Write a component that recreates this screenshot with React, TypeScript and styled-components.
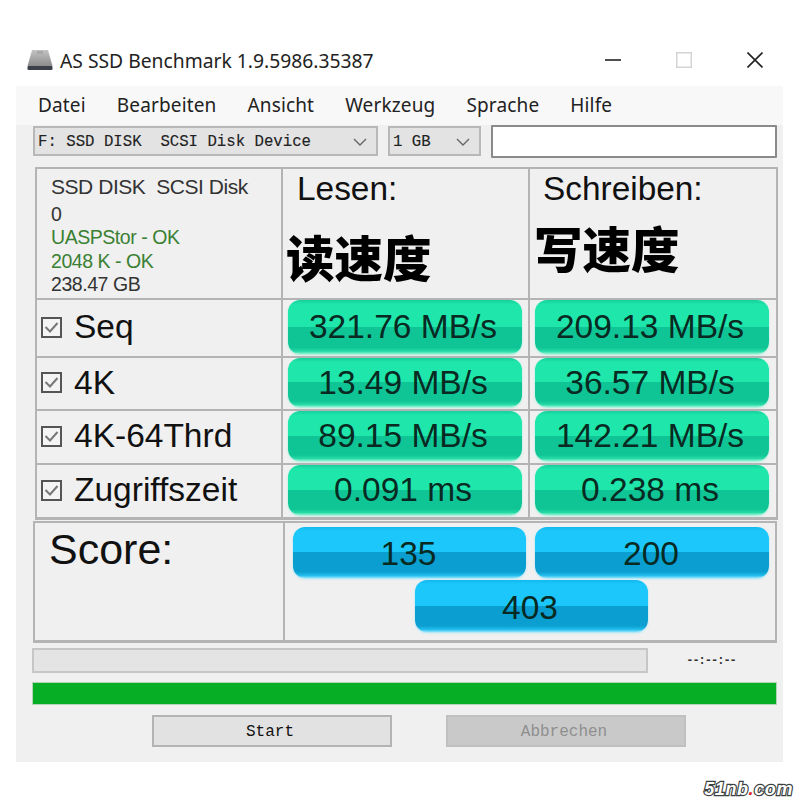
import React from "react";
import styled, { createGlobalStyle } from "styled-components";

const GlobalStyle = createGlobalStyle`
  html, body {
    margin: 0;
    background: #ffffff;
  }
  * {
    box-sizing: border-box;
  }
`;

const Page = styled.div`
  width: 800px;
  height: 800px;
  padding: 40px 16px 0;
  overflow: hidden;
  display: flex;
  flex-direction: column;
  font-family: "Liberation Sans", Arial, sans-serif;
  color: #111;
`;

const TitleBar = styled.div`
  height: 46px;
  display: flex;
  align-items: center;
  padding: 0 21px 6px 11px;
`;

const TitleText = styled.div`
  margin-left: 7px;
  font-family: "Noto Sans", sans-serif;
  font-size: 19.3px;
  color: #222;
  flex: 1;
`;

const WinButtons = styled.div`
  display: flex;
  align-items: center;
  gap: 55px;
`;

const Window = styled.div`
  width: 767px;
  height: 676px;
  background: #f0f0f0;
  display: flex;
  flex-direction: column;
`;

const MenuBar = styled.div`
  height: 39px;
  background: #f8f8f8;
  display: flex;
  align-items: center;
  padding: 0 0 2px 22px;
  gap: 31px;
  font-family: "Noto Sans", sans-serif;
  font-size: 19px;
  letter-spacing: 0.15px;
  color: #222;
`;

const Toolbar = styled.div`
  height: 33px;
  display: flex;
  align-items: flex-start;
  padding-left: 17px;
`;

const Select = styled.div<{ $w: number }>`
  width: ${(p) => p.$w}px;
  height: 30px;
  margin: 1px 10px 0 0;
  padding: 1px 8px 0 3px;
  display: flex;
  align-items: center;
  justify-content: space-between;
  background: #e3e3e3;
  border: 2px solid #b8b8b8;
  font-family: "Liberation Mono", monospace;
  font-size: 15.7px;
  white-space: pre;
  color: #222;
  -webkit-text-stroke: 0.12px #222;
`;

const TextBox = styled.div`
  width: 286px;
  height: 33px;
  background: #fff;
  border: 2px solid #8a8a8a;
  border-radius: 1px;
`;

const Results = styled.div`
  margin: 9px 0 0 19px;
  width: 743px;
  display: grid;
  grid-template-columns: 246px 247px 248px;
  grid-template-rows: 131px 58px 53px 54px 54px;
  border-right: 2px solid #b4b4b4;
  border-bottom: 3px solid #b4b4b4;
`;

const Cell = styled.div`
  border-top: 2px solid #b4b4b4;
  border-left: 2px solid #b4b4b4;
  min-width: 0;
`;

const InfoCell = styled(Cell)`
  padding: 6px 0 0 14px;
  font-size: 19.5px;
  line-height: 23.5px;
  color: #333;
  letter-spacing: -0.45px;
  white-space: pre;
`;

const InfoLine = styled.div<{ $ok?: boolean; $gap?: number; $big?: boolean }>`
  color: ${(p) => (p.$ok ? "#3a8033" : "#333")};
  font-size: ${(p) => (p.$big ? "21px" : "inherit")};
  margin-top: ${(p) => p.$gap ?? 0}px;
`;

const HeadCell = styled(Cell)`
  display: flex;
  flex-direction: column;
`;

const HeadTitle = styled.div<{ $left: number }>`
  font-size: 33.4px;
  line-height: 36px;
  margin: 2px 0 0 ${(p) => p.$left}px;
  color: #111;
`;

const HeadNote = styled.div<{ $left: number; $top: number }>`
  font-family: "Noto Sans CJK SC", sans-serif;
  font-weight: 900;
  font-size: 48.5px;
  line-height: 56px;
  color: #000;
  margin: ${(p) => p.$top}px 0 0 ${(p) => p.$left}px;
`;

const LabelCell = styled(Cell)`
  display: flex;
  align-items: center;
  padding: 0 0 2px 4px;
  font-size: 33.5px;
  color: #111;
`;

const Check = styled.span`
  width: 21px;
  height: 21px;
  margin-right: 12px;
  border: 2px solid #555;
  background: #f4f4f4;
  display: flex;
  align-items: center;
  justify-content: center;
`;

const TileCell = styled(Cell)`
  padding: 0 6px 2px 5px;
  display: flex;
  &:nth-child(3n) {
    padding-right: 7px;
  }
`;

const Tile = styled.div<{ $blue?: boolean }>`
  flex: 1;
  min-width: 0;
  display: flex;
  align-items: center;
  justify-content: center;
  padding-right: 4px;
  border-radius: 12px;
  font-size: 33.5px;
  color: #082a22;
  background: ${(p) =>
    p.$blue
      ? "linear-gradient(#12b8ee 0, #1cc8fb 8%, #1cc8fb 50%, #0a9fd0 50%, #0a9fd0 88%, #22bdec 95%, #8ae2fb 100%)"
      : "linear-gradient(#14cf9c 0, #1fe6aa 8%, #1fe6aa 50%, #10c595 50%, #10c595 88%, #26dba6 95%, #90f2d2 100%)"};
  box-shadow: 0 1px 2px ${(p) => (p.$blue ? "rgba(120,225,255,0.7)" : "rgba(120,240,205,0.7)")};
`;

const ScoreGrid = styled.div`
  margin: 1px 0 0 17px;
  width: 744px;
  height: 122px;
  display: grid;
  grid-template-columns: 250px 1fr;
  border: 2px solid #b4b4b4;
  border-bottom-width: 3px;
`;

const ScoreLabel = styled.div`
  font-size: 43px;
  line-height: 46px;
  padding: 3px 0 0 14px;
  border-right: 2px solid #b4b4b4;
  color: #111;
`;

const ScoreTiles = styled.div`
  display: grid;
  grid-template-columns: 233px 234px;
  grid-template-rows: 51px 52px;
  column-gap: 9px;
  row-gap: 2px;
  padding: 4px 0 0 8px;
`;

const ScoreTile = styled(Tile)`
  padding: 2px 2px 0 0;
  &:nth-child(3) {
    grid-column: 1 / 3;
    width: 233px;
    justify-self: center;
    padding-top: 4px;
  }
`;

const ProgressRow = styled.div`
  margin: 5px 0 0 16px;
  display: flex;
  align-items: center;
`;

const ProgressTrack = styled.div`
  width: 616px;
  height: 25px;
  background: #e4e4e4;
  border: 2px solid #c6c6c6;
`;

const Timer = styled.div`
  width: 126px;
  text-align: center;
  font-family: "Liberation Mono", monospace;
  font-size: 12px;
  font-weight: 700;
  color: #333;
  letter-spacing: -1px;
`;

const GreenBar = styled.div`
  margin: 9px 0 0 16px;
  width: 745px;
  height: 23px;
  background: #06ae26;
  border: 1px solid #b4d4ba;
`;

const ButtonRow = styled.div`
  margin: 10px 0 0 136px;
  display: flex;
  gap: 54px;
`;

const ActionButton = styled.div<{ $off?: boolean }>`
  width: 240px;
  height: 32px;
  padding: 1px 4px 0 0;
  display: flex;
  align-items: center;
  justify-content: center;
  font-family: "Liberation Mono", monospace;
  font-size: 16px;
  border: 2px solid ${(p) => (p.$off ? "#c0c0c0" : "#b4b4b4")};
  background: ${(p) => (p.$off ? "#c9c9c9" : "#e2e2e2")};
  color: ${(p) => (p.$off ? "#8f8f8f" : "#111")};
`;

const Watermark = styled.div`
  align-self: flex-end;
  margin: 17px -9px 0 0;
  font-family: "Liberation Sans", sans-serif;
  font-style: italic;
  font-weight: 700;
  font-size: 18px;
  line-height: 20px;
  letter-spacing: 0.6px;
  color: #ffffff;
  -webkit-text-stroke: 2.4px #3a3f3f;
  paint-order: stroke fill;
  span {
    color: #e02020;
    -webkit-text-stroke: 0;
  }
`;

const DiskIcon = () => (
  <svg width="26" height="22" viewBox="0 0 26 22">
    <defs>
      <linearGradient id="disk" x1="0" y1="0" x2="0" y2="1">
        <stop offset="0" stopColor="#c4c4c4" />
        <stop offset="1" stopColor="#8c8c8c" />
      </linearGradient>
    </defs>
    <path d="M5 1 H21 L25.5 17 H0.5 Z" fill="url(#disk)" />
    <path d="M10 2 h6 v3 h-6 Z" fill="#a8a8a8" />
    <rect x="0.5" y="17" width="25" height="4" rx="1" fill="#3c4048" />
  </svg>
);

const Chevron = () => (
  <svg width="16" height="10" viewBox="0 0 16 10" fill="none" stroke="#666" strokeWidth="1.4">
    <path d="M2 2 L8 8 L14 2" />
  </svg>
);

const Minimize = () => (
  <svg width="16" height="16" viewBox="0 0 16 16" stroke="#222" strokeWidth="1.6">
    <path d="M0 8 H16" />
  </svg>
);

const Maximize = () => (
  <svg width="16" height="16" viewBox="0 0 16 16" fill="none" stroke="#d4d4d4" strokeWidth="1.5">
    <rect x="0.75" y="0.75" width="14.5" height="14.5" />
  </svg>
);

const Close = () => (
  <svg width="16" height="16" viewBox="0 0 16 16" stroke="#222" strokeWidth="1.6">
    <path d="M0.5 0.5 L15.5 15.5 M15.5 0.5 L0.5 15.5" />
  </svg>
);

const Tick = () => (
  <svg width="15" height="13" viewBox="0 0 15 13" fill="none" stroke="#777" strokeWidth="2">
    <path d="M1.5 6 L6 10.5 L13.5 2" />
  </svg>
);

const rows = [
  { label: "Seq", read: "321.76 MB/s", write: "209.13 MB/s" },
  { label: "4K", read: "13.49 MB/s", write: "36.57 MB/s" },
  { label: "4K-64Thrd", read: "89.15 MB/s", write: "142.21 MB/s" },
  { label: "Zugriffszeit", read: "0.091 ms", write: "0.238 ms" },
];

const menus = ["Datei", "Bearbeiten", "Ansicht", "Werkzeug", "Sprache", "Hilfe"];

export default function App() {
  return (
    <Page>
      <GlobalStyle />
      <TitleBar>
        <DiskIcon />
        <TitleText>AS SSD Benchmark 1.9.5986.35387</TitleText>
        <WinButtons>
          <Minimize />
          <Maximize />
          <Close />
        </WinButtons>
      </TitleBar>
      <Window>
        <MenuBar>
          {menus.map((m) => (
            <span key={m}>{m}</span>
          ))}
        </MenuBar>
        <Toolbar>
          <Select $w={345}>
            F: SSD DISK  SCSI Disk Device
            <Chevron />
          </Select>
          <Select $w={93}>
            1 GB
            <Chevron />
          </Select>
          <TextBox />
        </Toolbar>
        <Results>
          <InfoCell>
            <InfoLine $big>SSD DISK  SCSI Disk</InfoLine>
            <InfoLine $gap={4}>0</InfoLine>
            <InfoLine $ok>UASPStor - OK</InfoLine>
            <InfoLine $ok>2048 K - OK</InfoLine>
            <InfoLine>238.47 GB</InfoLine>
          </InfoCell>
          <HeadCell>
            <HeadTitle $left={14}>Lesen:</HeadTitle>
            <HeadNote $left={3} $top={21}>读速度</HeadNote>
          </HeadCell>
          <HeadCell>
            <HeadTitle $left={13}>Schreiben:</HeadTitle>
            <HeadNote $left={4} $top={12}>写速度</HeadNote>
          </HeadCell>
          {rows.map((r) => (
            <React.Fragment key={r.label}>
              <LabelCell>
                <Check>
                  <Tick />
                </Check>
                {r.label}
              </LabelCell>
              <TileCell>
                <Tile>{r.read}</Tile>
              </TileCell>
              <TileCell>
                <Tile>{r.write}</Tile>
              </TileCell>
            </React.Fragment>
          ))}
        </Results>
        <ScoreGrid>
          <ScoreLabel>Score:</ScoreLabel>
          <ScoreTiles>
            <ScoreTile $blue>135</ScoreTile>
            <ScoreTile $blue>200</ScoreTile>
            <ScoreTile $blue>403</ScoreTile>
          </ScoreTiles>
        </ScoreGrid>
        <ProgressRow>
          <ProgressTrack />
          <Timer>--:--:--</Timer>
        </ProgressRow>
        <GreenBar />
        <ButtonRow>
          <ActionButton>Start</ActionButton>
          <ActionButton $off>Abbrechen</ActionButton>
        </ButtonRow>
      </Window>
      <Watermark>
        51nb<span>.</span>com
      </Watermark>
    </Page>
  );
}
